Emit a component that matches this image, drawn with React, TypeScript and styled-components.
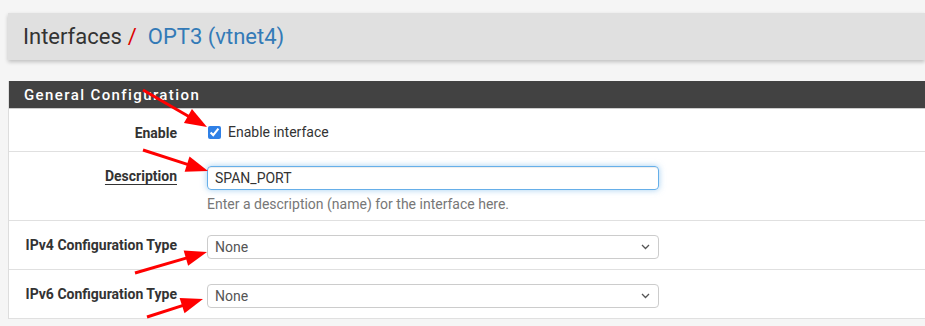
import React from "react";
import styled, { createGlobalStyle } from "styled-components";

const Global = createGlobalStyle`
  html, body { margin: 0; padding: 0; overflow: hidden; }
  body { background: #f5f5f5; font-family: Roboto, "Liberation Sans", sans-serif; color: #333; }
`;

const Page = styled.div`
  position: relative;
  width: 925px;
  box-sizing: border-box;
  padding: 13px 0 0 8px;
`;

const Breadcrumb = styled.div`
  height: 47px;
  background: #e0e0e0;
  box-shadow: 0 2px 4px rgba(0,0,0,0.22);
  display: flex;
  align-items: center;
  padding-left: 15px;
  font-size: 22px;
  color: #333;
`;

const Slash = styled.span`
  color: #d00;
  margin: 0 11px 0 6px;
`;

const Crumb = styled.span`
  color: #337ab7;
`;

const Panel = styled.div`
  margin-top: 21px;
  background: #fff;
  border-left: 1px solid #ddd;
`;

const Heading = styled.div`
  height: 28px;
  background: #424242;
  color: #fff;
  font-size: 15px;
  font-weight: 500;
  letter-spacing: 1.4px;
  display: flex;
  align-items: center;
  padding-left: 15px;
  border-bottom: 1px solid #ccc;
  box-sizing: border-box;
`;

const Row = styled.div<{ $h: number }>`
  display: grid;
  grid-template-columns: 183px 482px;
  height: ${(p) => p.$h}px;
  border-bottom: 1px solid #e0e0e0;
  box-sizing: border-box;
`;

const Label = styled.div<{ $top: number; $u?: boolean }>`
  text-align: right;
  padding-right: 15px;
  padding-top: ${(p) => p.$top}px;
  font-size: 14px;
  font-weight: 700;
  color: #333;
  white-space: nowrap;
  & span {
    text-decoration: ${(p) => (p.$u ? "underline" : "none")};
    text-underline-offset: 3px;
  }
`;

const Field = styled.div<{ $top: number }>`
  padding-left: 15px;
  padding-right: 15px;
  padding-top: ${(p) => p.$top}px;
  display: flex;
  flex-direction: column;
`;

const CheckLine = styled.label`
  display: flex;
  align-items: center;
  gap: 7px;
  font-size: 14px;
  color: #333;
`;

const Check = styled.input`
  width: 13px;
  height: 13px;
  margin: 0 0 0 1px;
  accent-color: #2f80e6;
`;

const TextBox = styled.div`
  height: 24px;
  box-sizing: border-box;
  border: 1px solid #66afe9;
  border-radius: 4px;
  box-shadow: inset 0 1px 1px rgba(0,0,0,.075), 0 0 6px rgba(102,175,233,.6);
  display: flex;
  align-items: center;
  padding-left: 7px;
  font-size: 14px;
  color: #333;
`;

const Help = styled.div`
  margin-top: 6px;
  font-size: 14px;
  color: #777;
`;

const Select = styled.div`
  height: 24px;
  box-sizing: border-box;
  border: 1px solid #ccc;
  border-radius: 4px;
  display: flex;
  align-items: center;
  justify-content: space-between;
  padding: 0 8px 0 7px;
  font-size: 14px;
  color: #555;
`;

const Overlay = styled.svg`
  position: absolute;
  left: 0;
  top: 0;
  pointer-events: none;
`;

const Chevron = () => (
  <svg width="9" height="6" viewBox="0 0 9 6">
    <path d="M1 1 L4.5 4.5 L8 1" fill="none" stroke="#555" strokeWidth="1.3" />
  </svg>
);

type A = [number, number, number, number];
const arrows: A[] = [
  [143, 90, 207, 127],
  [143, 150, 208, 171],
  [135, 273, 207, 252],
  [147, 317, 203, 299],
];

function Arrow({ a }: { a: A }) {
  const [x1, y1, x2, y2] = a;
  const dx = x2 - x1, dy = y2 - y1;
  const len = Math.hypot(dx, dy);
  const ux = dx / len, uy = dy / len;
  const hl = 22, hw = 8;
  const bx = x2 - ux * hl, by = y2 - uy * hl;
  const px = -uy, py = ux;
  return (
    <g>
      <line x1={x1} y1={y1} x2={bx + ux * 2} y2={by + uy * 2} stroke="#f00" strokeWidth="3" />
      <polygon
        points={`${x2},${y2} ${bx + px * hw},${by + py * hw} ${bx - px * hw},${by - py * hw}`}
        fill="#f00"
      />
    </g>
  );
}

export default function App() {
  return (
    <>
      <Global />
      <Page>
        <Breadcrumb>
          Interfaces<Slash>/</Slash>
          <Crumb>OPT3 (vtnet4)</Crumb>
        </Breadcrumb>
        <Panel>
          <Heading>General Configuration</Heading>
          <Row $h={43}>
            <Label $top={16}><span>Enable</span></Label>
            <Field $top={15}>
              <CheckLine>
                <Check type="checkbox" defaultChecked />
                Enable interface
              </CheckLine>
            </Field>
          </Row>
          <Row $h={69}>
            <Label $top={16} $u><span>Description</span></Label>
            <Field $top={14}>
              <TextBox>SPAN_PORT</TextBox>
              <Help>Enter a description (name) for the interface here.</Help>
            </Field>
          </Row>
          <Row $h={49}>
            <Label $top={16}><span>IPv4 Configuration Type</span></Label>
            <Field $top={14}>
              <Select>None<Chevron /></Select>
            </Field>
          </Row>
          <Row $h={49}>
            <Label $top={16}><span>IPv6 Configuration Type</span></Label>
            <Field $top={14}>
              <Select>None<Chevron /></Select>
            </Field>
          </Row>
        </Panel>
        <Overlay width="925" height="326">
          {arrows.map((a, i) => (
            <Arrow key={i} a={a} />
          ))}
        </Overlay>
      </Page>
    </>
  );
}
